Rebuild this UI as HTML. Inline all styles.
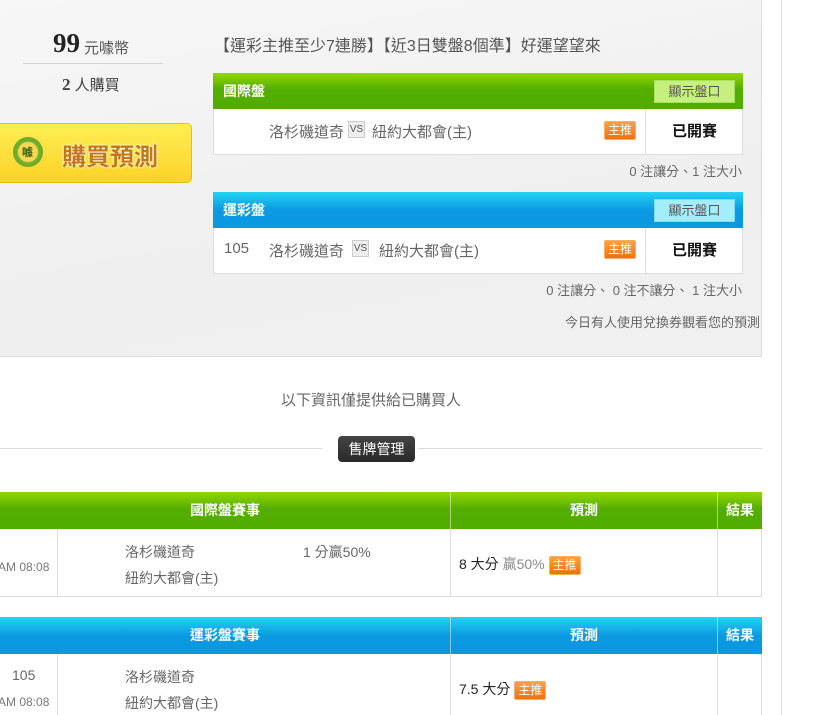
<!DOCTYPE html>
<html><head><meta charset="utf-8"><style>
*{margin:0;padding:0;box-sizing:border-box}
html,body{width:815px;height:715px;overflow:hidden}
body{background:#fff;position:relative;font-family:"Liberation Sans","Noto Sans CJK TC",sans-serif;color:#666}
.a{position:absolute;white-space:nowrap}
.top{position:absolute;left:0;top:0;width:762px;height:357px;background:linear-gradient(170deg,#f7f7f7 0%,#f3f3f3 30%,#efefef 60%,#f0f0f0 100%);border-right:1px solid #ddd;border-bottom:1px solid #ddd}
.vline{position:absolute;left:781px;top:0;width:1px;height:715px;background:#ddd}
.hdr{position:absolute;left:213px;width:530px;height:36px;color:#fff;font-weight:bold;font-size:14px;line-height:36px;padding-left:10px}
.g{background:linear-gradient(#92d800,#54ae00 45%,#52ac00)}
.b{background:linear-gradient(#24d4f2,#0b9ae2 50%,#0a98e0)}
.btn{position:absolute;right:8px;top:7px;width:81px;height:23px;font-size:13px;font-weight:normal;color:#555;line-height:22px;text-align:center}
.g .btn{background:#c6f07e;border:1px solid #a8e060}
.b .btn{background:#a2eefb;border:1px solid #80dcf0}
.row{position:absolute;left:213px;width:530px;height:46px;background:#fff;border:1px solid #ddd;border-top:none;font-size:15px;color:#666}
.row .div{position:absolute;left:431px;top:0;width:1px;height:45px;background:#ddd}
.vs{position:absolute;top:12px;width:17px;height:17px;border:1px solid #ccc;background:#eee;font-size:10px;color:#555;text-align:center;line-height:15px}
.zt{display:inline-block;background:linear-gradient(#ffa040,#f07010);color:#fff;font-size:12px;line-height:17px;padding:0 3px;border-radius:2px;border:1px solid #f8b060}
.done{position:absolute;left:432px;width:97px;top:0;line-height:45px;text-align:center;color:#111;font-weight:bold;font-size:15px}
.th{position:absolute;left:0;width:762px;height:37px;color:#fff;font-weight:bold;font-size:14px;line-height:37px}
.th span{position:absolute;text-align:center;top:0}
.th i{position:absolute;top:0;width:1px;height:37px;background:rgba(255,255,255,.5)}
.tr{position:absolute;left:0;width:762px;border-bottom:1px solid #ddd;border-right:1px solid #ddd;font-size:14px}
.tr i{position:absolute;top:0;width:1px;background:#ddd}
</style></head><body>
<div class="top"></div>
<div class="vline"></div>
<div class="a" style="left:53px;top:28px;font-family:'Liberation Serif',serif;font-weight:bold;font-size:27px;color:#222">99</div>
<div class="a" style="left:84px;top:37px;font-size:15px;color:#555">元噱幣</div>
<div class="a" style="left:23px;top:63px;width:140px;height:1px;background:#d6d6d6"></div>
<div class="a" style="left:62px;top:74px;font-size:15px;color:#444"><b style="font-family:'Liberation Serif',serif;font-size:17px">2</b> 人購買</div>
<div class="a" style="left:-4px;top:123px;width:196px;height:60px;border-radius:5px;background:linear-gradient(#ffee50,#fde040 50%,#fbd324);border:1px solid #e2bd22"></div>
<div class="a" style="left:13px;top:137px;width:30px;height:30px;border-radius:50%;background:radial-gradient(#f6d850 45%,#78b030 50%,#5a9a20);"></div>
<div class="a" style="left:22px;top:144px;font-size:11px;font-weight:bold;color:#2a5a10">噱</div>
<div class="a" style="left:62px;top:137px;font-size:24px;font-weight:bold;color:#c07818;text-shadow:0 0 2px #fff,0 0 2px #fff">購買預測</div>
<div class="a" style="left:214px;top:32px;font-size:16px;color:#555">【運彩主推至少7連勝】【近3日雙盤8個準】好運望望來</div>

<div class="hdr g" style="top:73px">國際盤<div class="btn">顯示盤口</div></div>
<div class="row" style="top:109px">
<span class="a" style="left:55px;top:12px">洛杉磯道奇</span><div class="vs" style="left:134px">VS</div><span class="a" style="left:158px;top:12px">紐約大都會(主)</span>
<span class="a" style="left:390px;top:12px"><span class="zt">主推</span></span>
<div class="div"></div><div class="done">已開賽</div></div>
<div class="a" style="right:73px;top:161px;font-size:13px">0 注讓分、1 注大小</div>

<div class="hdr b" style="top:192px">運彩盤<div class="btn">顯示盤口</div></div>
<div class="row" style="top:228px">
<span class="a" style="left:10px;top:12px">105</span>
<span class="a" style="left:55px;top:12px">洛杉磯道奇</span><div class="vs" style="left:138px">VS</div><span class="a" style="left:165px;top:12px">紐約大都會(主)</span>
<span class="a" style="left:390px;top:12px"><span class="zt">主推</span></span>
<div class="div"></div><div class="done">已開賽</div></div>
<div class="a" style="right:73px;top:280px;font-size:13px">0 注讓分、 0 注不讓分、 1 注大小</div>
<div class="a" style="right:55px;top:312px;font-size:13px">今日有人使用兌換券觀看您的預測</div>

<div class="a" style="left:281px;top:389px;font-size:15px">以下資訊僅提供給已購買人</div>
<div class="a" style="left:0;top:448px;width:322px;height:1px;background:#ddd"></div>
<div class="a" style="left:418px;top:448px;width:344px;height:1px;background:#ddd"></div>
<div class="a" style="left:338px;top:436px;width:77px;height:26px;background:linear-gradient(#444,#2a2a2a);border-radius:4px;color:#fff;font-size:14px;text-align:center;line-height:26px">售牌管理</div>

<div class="th g" style="top:492px"><span style="left:0;width:450px">國際盤賽事</span><i style="left:450px"></i><span style="left:451px;width:266px">預測</span><i style="left:717px"></i><span style="left:718px;width:44px">結果</span></div>
<div class="tr" style="top:529px;height:68px"><i style="left:57px;height:67px"></i><i style="left:450px;height:67px"></i><i style="left:717px;height:67px"></i>
<span class="a" style="left:-2px;top:31px;font-size:12px;color:#777">AM 08:08</span>
<span class="a" style="left:125px;top:13px">洛杉磯道奇</span><span class="a" style="left:303px;top:13px">1 分贏50%</span>
<span class="a" style="left:125px;top:39px">紐約大都會(主)</span>
<span class="a" style="left:459px;top:25px;color:#222">8 大分 <span style="color:#888">贏50%</span> <span class="zt">主推</span></span></div>

<div class="th b" style="top:617px"><span style="left:0;width:450px">運彩盤賽事</span><i style="left:450px"></i><span style="left:451px;width:266px">預測</span><i style="left:717px"></i><span style="left:718px;width:44px">結果</span></div>
<div class="tr" style="top:654px;height:70px"><i style="left:57px;height:70px"></i><i style="left:450px;height:70px"></i><i style="left:717px;height:70px"></i>
<span class="a" style="left:12px;top:13px">105</span>
<span class="a" style="left:-2px;top:41px;font-size:12px;color:#777">AM 08:08</span>
<span class="a" style="left:125px;top:13px">洛杉磯道奇</span>
<span class="a" style="left:125px;top:39px">紐約大都會(主)</span>
<span class="a" style="left:459px;top:25px;color:#222">7.5 大分 <span class="zt">主推</span></span></div>
</body></html>
